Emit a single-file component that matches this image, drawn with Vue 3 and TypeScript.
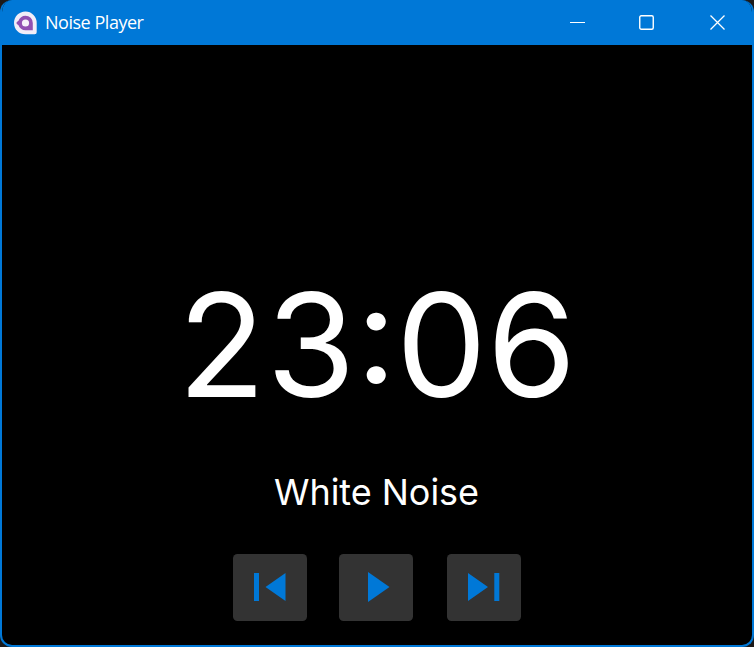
<script setup lang="ts">
import { ref } from 'vue'

const hours = ref<string>('23')
const minutes = ref<string>('06')
const track = ref<string>('White Noise')
</script>

<template>
  <div class="desktop">
    <main class="window">
      <header class="titlebar">
        <svg class="logo" width="24" height="24" viewBox="0 0 24 24">
          <path d="M12.5.5C6 .5 1 5.6 1 12s5 11.3 11.5 11.3h9.2a2 2 0 0 0 2-2V12A11.3 11.3 0 0 0 12.5.5z" fill="#f1edf8" />
          <path d="M12.5 4.7c-3.4 0-6 2.1-7 5L3.6 11.3v1.4l1.9 1.6c1 2.9 3.6 5 7 5h7.3V12a7.3 7.3 0 0 0-7.3-7.3z" fill="#9150b2" />
          <circle cx="12.5" cy="12" r="3.6" fill="#f6f1f9" />
        </svg>
        <h1 class="title">Noise Player</h1>
        <div class="controls">
          <button class="control" aria-label="Minimize">
            <svg width="16" height="16" viewBox="0 0 16 16"><path d="M0 7.5h15" /></svg>
          </button>
          <button class="control" aria-label="Maximize">
            <svg width="16" height="16" viewBox="0 0 16 16"><rect x=".75" y=".75" width="13.5" height="13.5" rx="1.5" stroke-width="1.4" /></svg>
          </button>
          <button class="control" aria-label="Close">
            <svg width="16" height="16" viewBox="0 0 16 16"><path d="M.5.5l14 14M14.5.5l-14 14" stroke-width="1.3" /></svg>
          </button>
        </div>
      </header>
      <section class="player">
        <div class="clock"><span class="hours">{{ hours }}</span><span class="colon">:</span><span>{{ minutes }}</span></div>
        <div class="track">{{ track }}</div>
        <nav class="buttons">
          <button class="media" aria-label="Previous">
            <svg width="74" height="67" viewBox="0 0 74 67"><path d="M21 19h5v28h-5zM52.5 19v28L32.5 33z" /></svg>
          </button>
          <button class="media" aria-label="Play">
            <svg width="74" height="67" viewBox="0 0 74 67"><path d="M29 18v30l21.5-15z" /></svg>
          </button>
          <button class="media next" aria-label="Next">
            <svg width="74" height="67" viewBox="0 0 74 67"><path d="M21 19v28l20-14zM47.3 19h5v28h-5z" /></svg>
          </button>
        </nav>
      </section>
    </main>
  </div>
</template>

<style>
body {
  margin: 0;
  background: #1c1a1a;
}
</style>

<style scoped>
.desktop {
  width: 754px;
  height: 647px;
  background: #1c1a1a;
  overflow: hidden;
}
.window {
  box-sizing: border-box;
  width: 754px;
  height: 647px;
  display: flex;
  flex-direction: column;
  border: 2px solid #0078d7;
  border-top: 0;
  border-radius: 12px;
  background: #000;
  overflow: hidden;
}
.titlebar {
  flex: none;
  height: 45px;
  display: flex;
  align-items: center;
  background: #0078d7;
  color: #fff;
}
.logo {
  margin-left: 11px;
}
.title {
  margin: 0 0 0 8px;
  padding-bottom: 2px;
  font: 400 18px/24px 'Open Sans', sans-serif;
  letter-spacing: -0.47px;
}
.controls {
  margin-left: auto;
  display: flex;
  height: 45px;
}
.control {
  width: 70px;
  padding: 0;
  border: 0;
  background: none;
  display: flex;
  align-items: center;
  justify-content: center;
}
.control:first-child,
.control:last-child {
  padding-left: 2px;
}
.control svg {
  flex: none;
  fill: none;
  stroke: #fff;
  stroke-width: 1;
}
.player {
  flex: 1;
  display: flex;
  flex-direction: column;
  align-items: center;
  color: #fff;
  font-family: Inter, sans-serif;
}
.clock {
  display: flex;
  margin-top: 213px;
  font-size: 144px;
  line-height: 174px;
}
.hours {
  letter-spacing: 1px;
  margin-right: -1px;
}
.colon {
  margin-right: -1px;
  transform: translateY(-10.5px) scaleY(0.94);
}
.track {
  margin-top: 38px;
  padding-right: 1px;
  font-size: 36px;
  line-height: 44px;
  letter-spacing: -0.04px;
}
.buttons {
  display: flex;
  gap: 32px;
  margin-top: 40px;
}
.media {
  width: 74px;
  height: 67px;
  padding: 0;
  border: 0;
  border-radius: 4.5px;
  background: #333;
}
.media svg {
  display: block;
  fill: #0078d7;
}
.next {
  margin-left: 2px;
}
</style>
